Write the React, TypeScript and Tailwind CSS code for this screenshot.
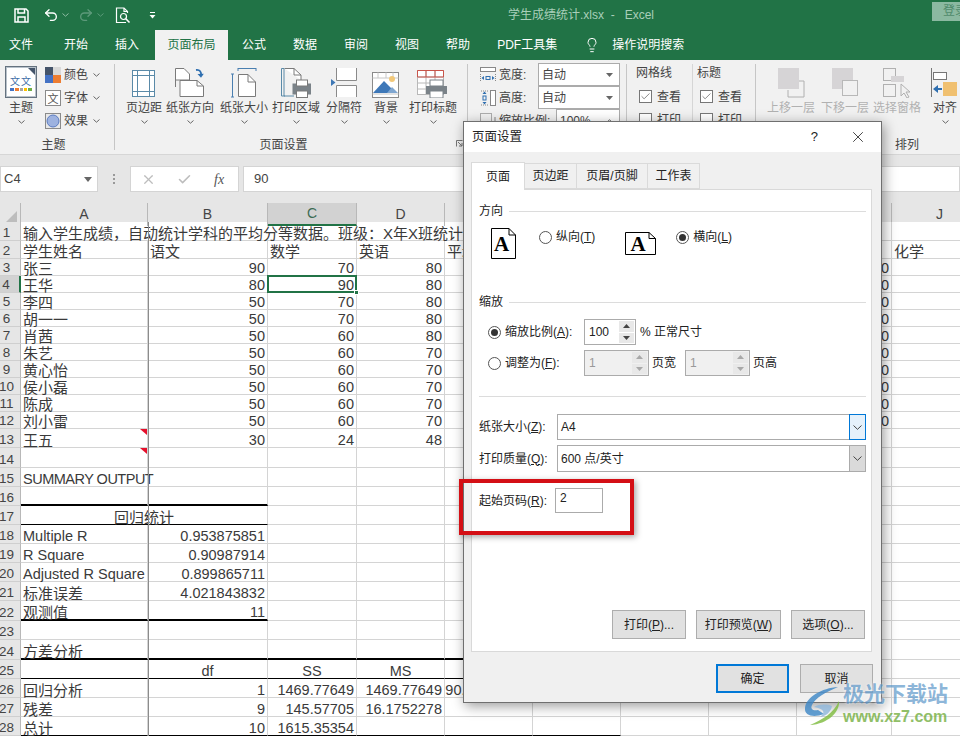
import type { ReactNode } from "react";
import { Undo2, Redo2, Lightbulb, X, Check } from "lucide-react";

type Row = {
  n: number;
  h: string;
  cells: string[];
  span?: string;
  center?: boolean;
  edge?: string;
  edgeCols?: number;
};

const gridCols = "grid grid-cols-[21px_127px_120px_89px_88px_88px_88px_88px_88px_95px_96px] w-[1008px]";
// E to I sit behind the dialog
const colNames = ["A", "B", "C", "D", "", "", "", "", "", "J"];

const thick = "border-b-2 border-b-black";
const thin = "border-b border-b-black";

const rows: Row[] = [
  { n: 1, h: "h-[19px]", span: "col-span-9", cells: ["输入学生成绩，自动统计学科的平均分等数据。班级：X年X班统计", ""] },
  { n: 2, h: "h-[18px]", cells: ["学生姓名", "语文", "数学", "英语", "平均分", "", "", "", "", "化学"] },
  { n: 3, h: "h-[17px]", cells: ["张三", "90", "70", "80", "", "", "", "", "80", ""] },
  { n: 4, h: "h-[17px]", cells: ["王华", "80", "90", "80", "", "", "", "", "80", ""] },
  { n: 5, h: "h-[17px]", cells: ["李四", "50", "70", "80", "", "", "", "", "80", ""] },
  { n: 6, h: "h-[17px]", cells: ["胡一一", "50", "70", "80", "", "", "", "", "80", ""] },
  { n: 7, h: "h-[17px]", cells: ["肖茜", "50", "60", "80", "", "", "", "", "80", ""] },
  { n: 8, h: "h-[17px]", cells: ["朱艺", "50", "60", "70", "", "", "", "", "80", ""] },
  { n: 9, h: "h-[17px]", cells: ["黄心怡", "50", "60", "70", "", "", "", "", "80", ""] },
  { n: 10, h: "h-[17px]", cells: ["侯小磊", "50", "60", "70", "", "", "", "", "80", ""] },
  { n: 11, h: "h-[17px]", cells: ["陈成", "50", "60", "70", "", "", "", "", "80", ""] },
  { n: 12, h: "h-[17px]", cells: ["刘小雷", "50", "60", "70", "", "", "", "", "80", ""] },
  { n: 13, h: "h-[19px]", cells: ["王五", "30", "24", "48", "", "", "", "", "", ""] },
  { n: 14, h: "h-[20px]", cells: ["", "", "", "", "", "", "", "", "", ""] },
  { n: 15, h: "h-[19px]", cells: ["SUMMARY OUTPUT", "", "", "", "", "", "", "", "", ""] },
  { n: 16, h: "h-[19px]", edge: thick, edgeCols: 2, cells: ["", "", "", "", "", "", "", "", "", ""] },
  { n: 17, h: "h-[19px]", span: "col-span-2", center: true, edge: thin, edgeCols: 1, cells: ["回归统计", "", "", "", "", "", "", "", ""] },
  { n: 18, h: "h-[19px]", cells: ["Multiple R", "0.953875851", "", "", "", "", "", "", "", ""] },
  { n: 19, h: "h-[19px]", cells: ["R Square", "0.90987914", "", "", "", "", "", "", "", ""] },
  { n: 20, h: "h-[19px]", cells: ["Adjusted R Square", "0.899865711", "", "", "", "", "", "", "", ""] },
  { n: 21, h: "h-[19px]", cells: ["标准误差", "4.021843832", "", "", "", "", "", "", "", ""] },
  { n: 22, h: "h-[20px]", edge: thick, edgeCols: 2, cells: ["观测值", "11", "", "", "", "", "", "", "", ""] },
  { n: 23, h: "h-[19px]", cells: ["", "", "", "", "", "", "", "", "", ""] },
  { n: 24, h: "h-[20px]", edge: thick, edgeCols: 6, cells: ["方差分析", "", "", "", "", "", "", "", "", ""] },
  { n: 25, h: "h-[19px]", center: true, edge: thin, edgeCols: 6, cells: ["", "df", "SS", "MS", "", "", "", "", "", ""] },
  { n: 26, h: "h-[19px]", cells: ["回归分析", "1", "1469.77649", "1469.77649", "90.86586012", "", "", "", "", ""] },
  { n: 27, h: "h-[19px]", cells: ["残差", "9", "145.57705", "16.1752278", "", "", "", "", "", ""] },
  { n: 28, h: "h-[19px]", edge: thin, edgeCols: 6, cells: ["总计", "10", "1615.35354", "", "", "", "", "", "", ""] },
];

function Chevron({ color = "#666" }: { color?: string }) {
  return (
    <svg width="7" height="4" viewBox="0 0 7 4" fill="none">
      <path d="M0.5 0.5 L3.5 3.2 L6.5 0.5" stroke={color} strokeWidth="1" />
    </svg>
  );
}

function SaveIcon() {
  return (
    <svg width="15" height="15" viewBox="0 0 15 15" fill="none" stroke="#fff" strokeWidth="1.5">
      <path d="M1 1 H12 L14 3 V14 H1 Z" />
      <path d="M4 1 V5 H10.5 V1" />
      <path d="M4 14 V9 H11 V14" />
    </svg>
  );
}

function PreviewIcon() {
  return (
    <svg width="17" height="17" viewBox="0 0 17 17" fill="none" stroke="#fff" strokeWidth="1.2">
      <path d="M11 15.5 H1.5 V1 H9 L12.5 4.5 V6" />
      <path d="M9 1 V4.5 H12.5" />
      <circle cx="8.5" cy="9.5" r="3" />
      <path d="M10.8 11.8 L14.5 15.5" strokeWidth="1.6" />
    </svg>
  );
}

function ThemeIcon() {
  return (
    <svg width="32" height="32" viewBox="0 0 32 32">
      <rect x="0.5" y="0.5" width="31" height="31" fill="#fff" stroke="#65727f" />
      <rect x="1.5" y="1.5" width="29" height="29" fill="none" stroke="#b9c2cb" />
      <path d="M23 2 H30 V9 Z" fill="#44546a" />
      <text x="5" y="19" fontSize="10" fill="#3f6fa8">文</text>
      <text x="16" y="19" fontSize="10" fill="#3f6fa8">文</text>
      <rect x="5" y="22" width="4" height="3" fill="#4472c4" />
      <rect x="10" y="22" width="4" height="3" fill="#ed7d31" />
      <rect x="15" y="22" width="3" height="3" fill="#a5a5a5" />
      <rect x="19" y="22" width="3" height="3" fill="#ffc000" />
      <rect x="23" y="22" width="4" height="3" fill="#70ad47" />
    </svg>
  );
}

function ColorsIcon() {
  return (
    <svg width="16" height="16" viewBox="0 0 16 16">
      <rect width="8" height="8" fill="#44546a" />
      <rect x="8" width="8" height="8" fill="#d9d9d9" />
      <rect y="8" width="8" height="8" fill="#4472c4" />
      <rect x="8" y="8" width="8" height="8" fill="#ed7d31" />
    </svg>
  );
}

function FontsIcon() {
  return (
    <svg width="16" height="16" viewBox="0 0 16 16">
      <rect x="0.5" y="0.5" width="15" height="15" fill="#fff" stroke="#8a8a8a" />
      <text x="2.5" y="12.5" fontSize="11" fill="#555">文</text>
    </svg>
  );
}

function EffectsIcon() {
  return (
    <svg width="16" height="16" viewBox="0 0 16 16">
      <rect x="0.5" y="0.5" width="15" height="15" fill="#e8e8e8" stroke="#8a8a8a" />
      <circle cx="8" cy="8" r="6" fill="#9db2e0" stroke="#5b7bc0" />
    </svg>
  );
}

function MarginsIcon() {
  return (
    <svg width="24" height="28" viewBox="0 0 24 28" fill="#fff" stroke="#5a8aa8">
      <rect x="0.5" y="0.5" width="22" height="26" />
      <path d="M5.5 0.5 V26.5 M17.5 0.5 V26.5 M0.5 5.5 H22.5 M0.5 21.5 H22.5" fill="none" />
    </svg>
  );
}

function OrientationIcon() {
  return (
    <svg width="30" height="30" viewBox="0 0 30 30" fill="#fff" stroke="#7a7a7a">
      <path d="M0.5 0.5 H9 L14.5 6 V12 H0.5 Z M0.5 12 V19" />
      <path d="M5 12.5 H22 L28.5 18 V28.5 H5 Z" />
      <path d="M22 12.5 V18 H28.5" fill="none" />
      <path d="M21 2 C25 1.5 26.5 4 26 7.5" fill="none" stroke="#2f6fb0" strokeWidth="1.8" />
      <path d="M22.5 6 L26 9.8 L28.8 5.8 Z" fill="#2f6fb0" stroke="none" />
    </svg>
  );
}

function SizeIcon() {
  return (
    <svg width="26" height="30" viewBox="0 0 26 30" fill="#fff" stroke="#7a7a7a">
      <path d="M1.5 6 V29 M0 6 H3 M0 29 H3" stroke="#4a7fb0" fill="none" />
      <path d="M7 0.5 H25 M7 0 V3 M25 0 V3" stroke="#4a7fb0" fill="none" />
      <path d="M7.5 6.5 H17 L24.5 14 V28.5 H7.5 Z" />
      <path d="M17 6.5 V14 H24.5" fill="none" />
    </svg>
  );
}

function PrintAreaIcon() {
  return (
    <svg width="30" height="30" viewBox="0 0 30 30" fill="#fff" stroke="#7a7a7a">
      <path d="M0.5 0.5 H3 V28 H13 M0.5 0.5 V28 H4" stroke="#5a8aa8" fill="none" />
      <path d="M3.5 0.5 H13 L20 7 V12" />
      <path d="M13 0.5 V7 H20" fill="none" />
      <rect x="12" y="16" width="17.5" height="10" fill="#7a8288" stroke="#7a8288" />
      <rect x="15.5" y="12" width="11" height="6" />
      <rect x="15.5" y="23" width="11" height="6.5" />
    </svg>
  );
}

function BreaksIcon() {
  return (
    <svg width="26" height="30" viewBox="0 0 26 30" fill="#fff" stroke="#8a8a8a">
      <path d="M5.5 0 V12.5 H25.5 V0" />
      <path d="M5.5 29 V17.5 H25.5 V29" />
      <path d="M0 11 L4.5 14.5 L0 18 Z" fill="#3f78b5" stroke="none" />
    </svg>
  );
}

function BackgroundIcon() {
  return (
    <svg width="28" height="26" viewBox="0 0 28 26">
      <rect x="0.5" y="0.5" width="26" height="25" fill="#fff" stroke="#8a8a8a" />
      <path d="M0.5 6 H26.5 M0.5 22 H26.5 M6 0.5 V6 M14 0.5 V6 M21 0.5 V6" stroke="#c8c8c8" />
      <circle cx="20" cy="7" r="3" fill="#f2c879" />
      <path d="M1 21 L12 9 L24 21 Z" fill="#3e78b8" />
      <path d="M15 21 L20 15 L26 21 Z" fill="#7fa6d0" />
    </svg>
  );
}

function PrintTitlesIcon() {
  return (
    <svg width="32" height="28" viewBox="0 0 32 28" fill="#fff">
      <rect x="0.5" y="0.5" width="26" height="24" stroke="#b8b8b8" />
      <path d="M0.5 7 H26.5 M0.5 13 H26.5 M0.5 19 H26.5 M9 0.5 V24 M18 0.5 V24" stroke="#b8b8b8" fill="none" />
      <path d="M0.5 0.5 H26.5 V7 H0.5 Z M9 0.5 V7 M18 0.5 V7" stroke="#c9544a" fill="none" />
      <rect x="9" y="16" width="21" height="8" fill="#7a8288" />
      <rect x="13" y="10" width="13" height="6" stroke="#7a8288" />
      <rect x="13" y="21" width="13" height="7" stroke="#7a8288" />
    </svg>
  );
}

function WidthIcon() {
  return (
    <svg width="16" height="16" viewBox="0 0 16 16" fill="none">
      <rect x="0.5" y="0.5" width="15" height="4" stroke="#888" fill="#fff" />
      <path d="M0.5 7 V15 M15.5 7 V15" stroke="#888" strokeDasharray="1 1" />
      <path d="M1.5 11 L4 9 V13 Z M14.5 11 L12 9 V13 Z" fill="#2f6fb0" />
      <rect x="6" y="9.5" width="4" height="3" stroke="#2f6fb0" />
    </svg>
  );
}

function HeightIcon() {
  return (
    <svg width="16" height="16" viewBox="0 0 16 16" fill="none">
      <rect x="10.5" y="0.5" width="5" height="15" stroke="#888" fill="#fff" />
      <path d="M1 1 H8 M1 15 H8" stroke="#888" strokeDasharray="1 1" />
      <path d="M4.5 1.5 L2.5 4 H6.5 Z M4.5 14.5 L2.5 12 H6.5 Z" fill="#2f6fb0" />
      <rect x="3" y="6" width="3" height="4" stroke="#2f6fb0" />
    </svg>
  );
}

function ScaleIcon() {
  return (
    <svg width="16" height="16" viewBox="0 0 16 16" fill="none">
      <rect x="0.5" y="0.5" width="11" height="9" stroke="#666" strokeDasharray="1 1" />
      <path d="M3 14 H15 M15 4 V14" stroke="#888" />
    </svg>
  );
}

function BringForwardIcon() {
  return (
    <svg width="27" height="30" viewBox="0 0 27 30" fill="none">
      <rect x="0" y="0" width="21" height="21" fill="#d6d4d6" />
      <path d="M21 13 H26 V29 H10 V22" stroke="#b0b0b0" />
    </svg>
  );
}

function SendBackwardIcon() {
  return (
    <svg width="27" height="30" viewBox="0 0 27 30">
      <rect x="0" y="0" width="21" height="21" fill="#d6d4d6" />
      <rect x="10.5" y="12.5" width="15" height="15" fill="#f1f1f1" stroke="#b8b8b8" />
    </svg>
  );
}

function PaneIcon() {
  return (
    <svg width="28" height="30" viewBox="0 0 28 30" fill="none" stroke="#b0b0b0">
      <rect x="0.5" y="0.5" width="12" height="12" />
      <rect x="0.5" y="16.5" width="12" height="12" />
      <rect x="8" y="8" width="13" height="6" fill="#d6d4d6" stroke="none" />
      <path d="M18 16 V28 L21 25 L24 30 L26 29 L23 24 H27 Z" fill="#f1f1f1" />
    </svg>
  );
}

function AlignIcon() {
  return (
    <svg width="28" height="30" viewBox="0 0 28 30" fill="none">
      <path d="M0.5 0 V29" stroke="#777" />
      <rect x="2.5" y="4.5" width="13" height="7" fill="#fff" stroke="#777" />
      <rect x="12" y="14" width="14" height="14" fill="#f0c070" />
      <path d="M2 21 L7 17 V20 H11 V22 H7 V25 Z" fill="#2f6fb0" />
    </svg>
  );
}

function BigButton({ w, label, icon, off }: { w: string; label: string; icon: ReactNode; off?: boolean }) {
  return (
    <div className={`${w} flex flex-col items-center shrink-0`}>
      <div className="h-[35px] flex items-end justify-center">{icon}</div>
      <div className={`h-[18px] leading-[18px] mt-[1px] whitespace-nowrap ${off ? "text-[#b1b1b1]" : "text-[#444]"}`}>{label}</div>
      {!off && (
        <div className="mt-[2px] h-[6px] flex items-center">
          <Chevron />
        </div>
      )}
    </div>
  );
}

function SmallButton({ icon, label }: { icon: ReactNode; label: string }) {
  return (
    <div className="h-[23px] flex items-center">
      {icon}
      <span className="ml-[3px] text-[#444]">{label}</span>
      <span className="ml-[5px]">
        <Chevron />
      </span>
    </div>
  );
}

function Group({ w, label, labelPad, children, launcher }: { w: string; label?: string; labelPad?: string; children: ReactNode; launcher?: boolean }) {
  return (
    <div className={`${w} shrink-0 relative flex flex-col`}>
      <div className="h-[73px] flex">{children}</div>
      {label && <div className={`h-[18px] leading-[18px] text-center text-[#444] ${labelPad ?? ""}`}>{label}</div>}
      <div className="absolute right-0 top-[1px] h-[86px] w-px bg-[#c6c6c6]" />
      {launcher && (
        <svg className="absolute right-[5px] top-[77px]" width="7" height="7" viewBox="0 0 7 7" fill="none" stroke="#777">
          <path d="M0.5 6.5 V0.5 H6.5 M2 2 L6 6 M6 3 V6 H3" />
        </svg>
      )}
    </div>
  );
}

function SizeRow({ icon, label, labelW, selW, value, spin }: { icon: ReactNode; label: string; labelW: string; selW: string; value: string; spin?: boolean }) {
  return (
    <div className="h-[23px] flex items-center">
      {icon}
      <span className={`ml-[3px] ${labelW} text-[#444]`}>{label}</span>
      <div className={`${selW} h-[23px] bg-white border border-[#ababab] flex items-center justify-between pl-[3px] pr-[6px] text-[#444]`}>
        <span>{value}</span>
        {spin ? (
          <svg width="7" height="4" viewBox="0 0 7 4" fill="none">
            <path d="M0.5 3.5 L3.5 0.8 L6.5 3.5" stroke="#666" />
          </svg>
        ) : (
          <svg width="7" height="4" viewBox="0 0 7 4">
            <path d="M0 0 H7 L3.5 4 Z" fill="#666" />
          </svg>
        )}
      </div>
    </div>
  );
}

function RibbonCheck({ label, checked }: { label: string; checked?: boolean }) {
  return (
    <div className="h-[23px] flex items-center pl-[3px]">
      <div className="w-[13px] h-[13px] bg-white border border-[#777] flex items-center justify-center">
        {checked && <Check size={11} color="#555" strokeWidth={1.5} />}
      </div>
      <span className="ml-[5px] text-[#444]">{label}</span>
    </div>
  );
}

function Ribbon() {
  return (
    <div className="h-[95px] bg-[#f1f1f1] border-b border-[#d6d6d6] pt-[3px] flex text-[12px]">
      <Group w="w-[115px]" label="主题" labelPad="pr-[8px]">
        <div className="pl-[2px] w-[45px]">
          <BigButton w="w-[38px]" label="主题" icon={<ThemeIcon />} />
        </div>
        <div>
          <SmallButton icon={<ColorsIcon />} label="颜色" />
          <SmallButton icon={<FontsIcon />} label="字体" />
          <SmallButton icon={<EffectsIcon />} label="效果" />
        </div>
      </Group>
      <Group w="w-[353px]" label="页面设置" labelPad="pr-[16px]" launcher>
        <div className="pl-[9px] flex">
          <BigButton w="w-[40px]" label="页边距" icon={<MarginsIcon />} />
          <BigButton w="w-[52px]" label="纸张方向" icon={<OrientationIcon />} />
          <BigButton w="w-[56px]" label="纸张大小" icon={<SizeIcon />} />
          <BigButton w="w-[48px]" label="打印区域" icon={<PrintAreaIcon />} />
          <BigButton w="w-[48px]" label="分隔符" icon={<BreaksIcon />} />
          <BigButton w="w-[36px]" label="背景" icon={<BackgroundIcon />} />
          <BigButton w="w-[58px]" label="打印标题" icon={<PrintTitlesIcon />} />
        </div>
      </Group>
      <Group w="w-[159px]">
        <div className="pl-[12px]">
          <SizeRow icon={<WidthIcon />} label="宽度:" labelW="w-[39px]" selW="w-[82px]" value="自动" />
          <SizeRow icon={<HeightIcon />} label="高度:" labelW="w-[39px]" selW="w-[82px]" value="自动" />
          <SizeRow icon={<ScaleIcon />} label="缩放比例:" labelW="w-[57px]" selW="w-[64px]" value="100%" spin />
        </div>
      </Group>
      <Group w="w-[129px]">
        <div className="pl-[9px] w-[66px] relative">
          <div className="h-[23px] leading-[23px] text-[#444] mt-[-1px]">网格线</div>
          <RibbonCheck label="查看" checked />
          <RibbonCheck label="打印" />
          <div className="absolute right-[0px] top-[1px] h-[66px] w-px bg-[#d6d6d6]" />
        </div>
        <div className="pl-[4px]">
          <div className="h-[23px] leading-[23px] text-[#444] mt-[-1px]">标题</div>
          <RibbonCheck label="查看" checked />
          <RibbonCheck label="打印" />
        </div>
      </Group>
      <Group w="w-[302px]" label="排列">
        <div className="pl-[8px] flex">
          <BigButton w="w-[54px]" label="上移一层" icon={<BringForwardIcon />} off />
          <BigButton w="w-[54px]" label="下移一层" icon={<SendBackwardIcon />} off />
          <BigButton w="w-[50px]" label="选择窗格" icon={<PaneIcon />} off />
          <BigButton w="w-[46px]" label="对齐" icon={<AlignIcon />} />
        </div>
      </Group>
    </div>
  );
}

function TitleBar() {
  return (
    <div className="h-[30px] bg-[#217346] flex items-center relative text-[12px]">
      <div className="flex items-center pl-[14px] text-white">
        <SaveIcon />
        <Undo2 className="ml-[14px]" size={16} strokeWidth={2} color="#fff" />
        <span className="ml-[3px]">
          <Chevron color="#8fbba3" />
        </span>
        <Redo2 className="ml-[9px]" size={16} strokeWidth={2} color="#5d9a7b" />
        <span className="ml-[3px]">
          <Chevron color="#5d9a7b" />
        </span>
        <span className="ml-[11px]">
          <PreviewIcon />
        </span>
        <svg className="ml-[17px]" width="7" height="7" viewBox="0 0 7 7">
          <path d="M1 0.5 H6" stroke="#fff" />
          <path d="M0.5 3 H6.5 L3.5 6.5 Z" fill="#fff" />
        </svg>
      </div>
      <div className="ml-[352px] text-[#a9cfba] text-[12px] whitespace-nowrap">学生成绩统计.xlsx&nbsp;&nbsp;-&nbsp;&nbsp;&nbsp;Excel</div>
      <div className="absolute right-0 top-[2px] w-[28px] h-[19px] bg-[#8bb9a1] text-[#4f8a6b] leading-[19px] pl-[11px] overflow-hidden whitespace-nowrap">登录</div>
    </div>
  );
}

function TabBar() {
  const tabs: [string, string][] = [
    ["文件", "ml-[9px]"],
    ["开始", "ml-[31px]"],
    ["插入", "ml-[27px]"],
  ];
  const tabs2: [string, string][] = [
    ["公式", "ml-[14px]"],
    ["数据", "ml-[27px]"],
    ["审阅", "ml-[27px]"],
    ["视图", "ml-[27px]"],
    ["帮助", "ml-[27px]"],
    ["PDF工具集", "ml-[27px]"],
  ];
  return (
    <div className="h-[30px] bg-[#217346] flex items-center text-[12px] text-white">
      {tabs.map(([label, m]) => (
        <span key={label} className={m}>
          {label}
        </span>
      ))}
      <span className="ml-[16px] w-[73px] h-[30px] bg-[#f1f1f1] text-[#217346] leading-[30px] text-center">页面布局</span>
      {tabs2.map(([label, m]) => (
        <span key={label} className={`${m} whitespace-nowrap`}>
          {label}
        </span>
      ))}
      <Lightbulb className="ml-[27px]" size={16} strokeWidth={1.5} color="#fff" />
      <span className="ml-[12px] whitespace-nowrap">操作说明搜索</span>
    </div>
  );
}

function FormulaBar() {
  return (
    <div className="h-[48px] bg-[#e6e6e6] pt-[11px] flex items-start">
      <div className="w-[98px] h-[26px] bg-white border border-[#d4d4d4] flex items-center justify-between pl-[3px] pr-[5px] text-[13px] text-[#444]">
        <span>C4</span>
        <svg width="8" height="5" viewBox="0 0 8 5">
          <path d="M0 0 H8 L4 5 Z" fill="#666" />
        </svg>
      </div>
      <div className="w-[32px] h-[26px] flex flex-col items-center justify-center gap-[2px]">
        <span className="w-[2px] h-[2px] bg-[#999]" />
        <span className="w-[2px] h-[2px] bg-[#999]" />
        <span className="w-[2px] h-[2px] bg-[#999]" />
      </div>
      <div className="w-[109px] h-[26px] bg-white border border-[#d4d4d4] flex items-center pl-[10px]">
        <X size={15} color="#bdbdbd" strokeWidth={2} />
        <Check className="ml-[21px]" size={15} color="#bdbdbd" strokeWidth={2.5} />
        <span className="ml-[22px] italic text-[#555] text-[14px] [font-family:'Liberation_Serif',serif]">fx</span>
      </div>
      <div className="ml-[4px] flex-1 h-[26px] bg-white border border-[#d4d4d4] leading-[24px] pl-[10px] text-[13px] text-[#444]">90</div>
    </div>
  );
}

function ColumnHeader() {
  return (
    <div className={`${gridCols} h-[19px] bg-[#e6e6e6] text-[14px] text-[#444]`}>
      <div className="border-r border-[#b8b8b8] relative">
        <svg className="absolute right-[3px] bottom-[4px]" width="11" height="11" viewBox="0 0 11 11">
          <path d="M11 0 V11 H0 Z" fill="#bdbdbd" />
        </svg>
      </div>
      {colNames.map((c, i) => (
        <div
          key={i}
          className={`flex items-center justify-center ${
            i === 2 ? "bg-[#d2d2d2] border-b-2 border-b-[#217346] border-r border-r-[#b8b8b8] text-[#3d6b54]" : "border-r border-[#b8b8b8]"
          }`}
        >
          {c}
        </div>
      ))}
    </div>
  );
}

function Corner() {
  return (
    <svg className="absolute right-0 top-0" width="7" height="6" viewBox="0 0 7 6">
      <path d="M0 0 H7 V6 Z" fill="#e6102c" />
    </svg>
  );
}

function Sheet() {
  return (
    <div className="relative text-[14.5px] text-[#3a3a3a]">
      {rows.map((row) => {
        const isNum = (s: string) => /^[\d.]+$/.test(s);
        const isCjk = (s: string) => /[\u4e00-\u9fff]/.test(s);
        return (
          <div key={row.n} className={`${gridCols} ${row.h}`}>
            <div
              className={`flex items-end justify-center pr-[7px] text-[13.5px] leading-[14px] border-b border-b-[#cfcfcf] text-[#444] ${
                row.n === 4 ? "bg-[#d2d2d2] border-r-2 border-r-[#217346]" : "bg-[#e6e6e6] border-r border-r-[#b8b8b8]"
              }`}
            >
              {row.n}
            </div>
            {row.cells.map((t, i) => {
              const align = row.center ? "justify-center" : isNum(t) ? "justify-end" : "justify-start";
              const edge = row.edge && i < (row.edgeCols ?? 0) ? row.edge : "border-b border-b-[#d4d4d4]";
              const size = isCjk(t) ? "text-[15px]" : t === "SUMMARY OUTPUT" ? "tracking-[-0.5px]" : "";
              return (
                <div
                  key={i}
                  className={`relative flex items-end pl-[2px] pr-[2px] whitespace-nowrap leading-[13px] border-r border-r-[#d4d4d4] ${align} ${edge} ${
                    i === 0 ? row.span ?? "" : ""
                  }`}
                >
                  <span className={`${size} z-[1]`}>{t}</span>
                  {i === 0 && (row.n === 13 || row.n === 14) && <Corner />}
                  {row.n === 4 && i === 2 && (
                    <>
                      <div className="absolute -left-[1px] -top-[1px] -right-[1px] -bottom-[1px] border-2 border-[#217346] z-[2]" />
                      <div className="absolute -right-[3px] -bottom-[3px] w-[5px] h-[5px] bg-[#217346] border border-white z-[3]" />
                    </>
                  )}
                </div>
              );
            })}
          </div>
        );
      })}
      <div className="absolute left-[148px] top-0 bottom-0 w-px bg-[#8c8c8c] z-[4]" />
    </div>
  );
}

function M({ c }: { c: string }) {
  return <span className="underline">{c}</span>;
}

function Radio({ on }: { on?: boolean }) {
  return (
    <span className="w-[13px] h-[13px] shrink-0 rounded-full border border-[#555] bg-white flex items-center justify-center">
      {on && <span className="w-[7px] h-[7px] rounded-full bg-[#333]" />}
    </span>
  );
}

function Section({ label }: { label: string }) {
  return (
    <div className="h-[16px] flex items-center pl-[7px] pr-[5px]">
      <span>{label}</span>
      <span className="ml-[6px] flex-1 h-px bg-[#dcdcdc]" />
    </div>
  );
}

function PortraitGlyph() {
  return (
    <svg width="25" height="31" viewBox="0 0 25 31" fill="#fff" stroke="#000">
      <path d="M0.5 0.5 H18 L24.5 7 V30.5 H0.5 Z" />
      <path d="M18 0.5 V7 H24.5" fill="none" />
      <text x="3" y="23" fontSize="21" fontWeight="700" fill="#000" stroke="none" fontFamily="Liberation Serif">A</text>
    </svg>
  );
}

function LandscapeGlyph() {
  return (
    <svg width="31" height="23" viewBox="0 0 31 23" fill="#fff" stroke="#000">
      <path d="M0.5 0.5 H24 L30.5 6.5 V22.5 H0.5 Z" />
      <path d="M24 0.5 V6.5 H30.5" fill="none" />
      <text x="5.5" y="19" fontSize="21" fontWeight="700" fill="#000" stroke="none" fontFamily="Liberation Serif">A</text>
    </svg>
  );
}

function Spinner({ w, value, disabled }: { w: string; value: string; disabled?: boolean }) {
  const fill = disabled ? "#a8a8a8" : "#444";
  return (
    <div className={`${w} h-[26px] border border-[#ababab] flex items-center pl-[4px] pr-[1px] ${disabled ? "bg-[#f0f0f0] text-[#999]" : "bg-white"}`}>
      <span className="flex-1">{value}</span>
      <div className="w-[15px] h-[22px] flex flex-col gap-[1px]">
        <div className="flex-1 bg-[#e8e8e8] flex items-center justify-center">
          <svg width="7" height="4" viewBox="0 0 7 4">
            <path d="M3.5 0 L7 4 H0 Z" fill={fill} />
          </svg>
        </div>
        <div className="flex-1 bg-[#e8e8e8] flex items-center justify-center">
          <svg width="7" height="4" viewBox="0 0 7 4">
            <path d="M0 0 H7 L3.5 4 Z" fill={fill} />
          </svg>
        </div>
      </div>
    </div>
  );
}

function Dropdown({ value, h, focus }: { value: string; h: string; focus?: boolean }) {
  return (
    <div className={`ml-[2px] w-[309px] ${h} bg-white border border-[#ababab] flex items-stretch`}>
      <span className="flex-1 pl-[3px] self-center">{value}</span>
      <div className={`w-[17px] -my-px -mr-px flex items-center justify-center border ${focus ? "bg-[#e5f1fb] border-[#0078d7]" : "bg-[#dadada] border-[#ababab]"}`}>
        <svg width="9" height="5" viewBox="0 0 9 5" fill="none">
          <path d="M0.5 0.5 L4.5 4.3 L8.5 0.5" stroke="#444" />
        </svg>
      </div>
    </div>
  );
}

function DlgButton({ w, children }: { w: string; children: ReactNode }) {
  return <div className={`${w} h-[29px] bg-[#e1e1e1] border border-[#adadad] flex items-center justify-center`}>{children}</div>;
}

function Dialog() {
  return (
    <div className="absolute left-[463px] top-[121px] w-[419px] h-[582px] bg-[#f0f0f0] border border-[#6f6f6f] shadow-[2px_3px_12px_rgba(0,0,0,0.4)] z-[10] flex flex-col text-[12px] text-[#222]">
      <div className="h-[30px] bg-white shrink-0 flex items-center pl-[8px]">
        <span className="flex-1 text-[12.5px]">页面设置</span>
        <span className="mr-[31px] text-[13px]">?</span>
        <X className="mr-[14px]" size={18} strokeWidth={1.1} color="#222" />
      </div>
      <div className="pl-[7px] pr-[9px] flex-1 flex flex-col">
        <div className="h-[29px] mt-[8px] flex items-end">
          <div className="w-[54px] h-[28px] bg-white border border-b-0 border-[#dadada] flex items-center justify-center relative z-[1] -mb-px">页面</div>
          <div className="w-[52px] h-[26px] border border-[#dadada] border-l-0 flex items-center justify-center">页边距</div>
          <div className="w-[71px] h-[26px] border border-[#dadada] border-l-0 flex items-center justify-center">页眉/页脚</div>
          <div className="w-[52px] h-[26px] border border-[#dadada] border-l-0 flex items-center justify-center">工作表</div>
        </div>
        <div className="h-[463px] bg-white border border-[#d9d9d9] flex flex-col">
          <div className="mt-[13px]">
            <Section label="方向" />
          </div>
          <div className="mt-[9px] h-[31px] pl-[19px] flex items-start">
            <PortraitGlyph />
            <div className="ml-[23px] flex items-center">
              <Radio />
              <span className="ml-[4px]">
                纵向(<M c="T" />)
              </span>
            </div>
            <div className="ml-[30px] mt-[4px]">
              <LandscapeGlyph />
            </div>
            <div className="ml-[20px] flex items-center">
              <Radio on />
              <span className="ml-[4px]">
                横向(<M c="L" />)
              </span>
            </div>
          </div>
          <div className="mt-[35px]">
            <Section label="缩放" />
          </div>
          <div className="mt-[9px] h-[26px] pl-[16px] flex items-center">
            <Radio on />
            <span className="ml-[4px] w-[79px]">
              缩放比例(<M c="A" />):
            </span>
            <Spinner w="w-[52px]" value="100" />
            <span className="ml-[4px]">% 正常尺寸</span>
          </div>
          <div className="mt-[5px] h-[26px] pl-[16px] flex items-center">
            <Radio />
            <span className="ml-[4px] w-[79px]">
              调整为(<M c="F" />):
            </span>
            <Spinner w="w-[65px]" value="1" disabled />
            <span className="ml-[3px] w-[33px]">页宽</span>
            <Spinner w="w-[65px]" value="1" disabled />
            <span className="ml-[3px]">页高</span>
          </div>
          <div className="mt-[20px] mx-[7px] mr-[5px] h-px bg-[#dcdcdc]" />
          <div className="mt-[17px] h-[26px] pl-[7px] flex items-center">
            <span className="w-[76px]">
              纸张大小(<M c="Z" />):
            </span>
            <Dropdown value="A4" h="h-[26px]" focus />
          </div>
          <div className="mt-[5px] h-[27px] pl-[7px] flex items-center">
            <span className="w-[76px]">
              打印质量(<M c="Q" />):
            </span>
            <Dropdown value="600 点/英寸" h="h-[27px]" />
          </div>
          <div className="mt-[16px] h-[25px] pl-[7px] flex items-center">
            <span className="w-[76px]">
              起始页码(<M c="R" />):
            </span>
            <div className="w-[48px] h-[25px] bg-white border border-[#ababab] pl-[4px] leading-[19px]">2</div>
          </div>
          <div className="mt-auto mb-[12px] pr-[6px] flex justify-end gap-[10px]">
            <DlgButton w="w-[74px]">
              打印(<M c="P" />)...
            </DlgButton>
            <DlgButton w="w-[85px]">
              打印预览(<M c="W" />)
            </DlgButton>
            <DlgButton w="w-[74px]">
              选项(<M c="O" />)...
            </DlgButton>
          </div>
        </div>
        <div className="mt-[12px] flex justify-end gap-[11px] -mr-[1px]">
          <div className="w-[73px] h-[29px] bg-[#e1e1e1] border-2 border-[#0078d7] flex items-center justify-center">确定</div>
          <div className="w-[73px] h-[29px] bg-[#e1e1e1] border border-[#adadad] flex items-center justify-center">取消</div>
        </div>
      </div>
    </div>
  );
}

function Watermark() {
  return (
    <div className="absolute left-[802px] top-[680px] z-[20] flex items-center opacity-80">
      <svg width="40" height="50" viewBox="0 0 40 50" fill="none">
        <path d="M36 7 C20 8 4 17 3 28 C2 36 12 38 22 34 L16 30 C11 31 8 29 10 25 C13 18 24 12 36 7 Z" fill="#3b86c6" />
        <path d="M12 27 C17 24 25 24 30 26 C29 32 24 36 18 37 C24 32 22 29 12 27 Z" fill="#8fb8dc" />
        <path d="M37 21 C38 32 26 44 8 45 C20 40 32 33 37 21 Z" fill="#7dbb3c" />
      </svg>
      <div className="ml-[1px] -mt-[2px]">
        <div className="text-[21px] leading-[26px] font-bold text-[#4a8cc4]/80 whitespace-nowrap [text-shadow:0_0_3px_white]">极光下载站</div>
        <div className="text-[16px] leading-[20px] font-bold text-[#76b043] whitespace-nowrap [text-shadow:0_0_3px_white]">www.xz7.com</div>
      </div>
    </div>
  );
}

export default function App() {
  return (
    <div className="relative w-[960px] h-[737px] overflow-hidden bg-white [font-family:'Liberation_Sans','Noto_Sans_CJK_SC',sans-serif]">
      <TitleBar />
      <TabBar />
      <Ribbon />
      <FormulaBar />
      <ColumnHeader />
      <Sheet />
      <Dialog />
      <div className="absolute left-[459px] top-[479px] w-[175px] h-[56px] border-[4px] border-[#d40f15] shadow-[2px_2px_6px_rgba(0,0,0,0.35)] z-[15]" />
      <Watermark />
    </div>
  );
}
